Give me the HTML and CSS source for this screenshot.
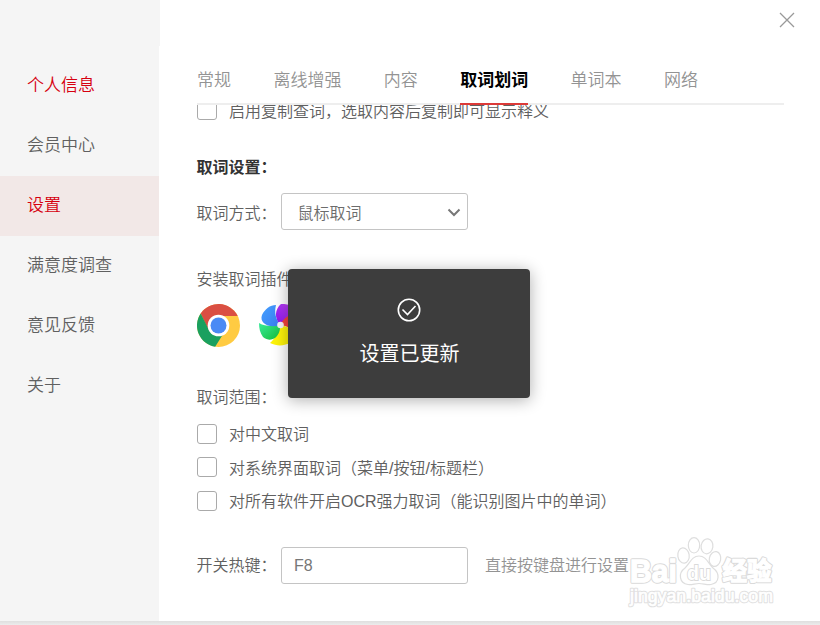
FILE: index.html
```
<!DOCTYPE html>
<html lang="zh-CN">
<head>
<meta charset="utf-8">
<title>设置</title>
<link rel="stylesheet" href="styles.css">
</head>
<body>
<div class="window">
  <nav class="sidebar">
    <a class="side-item accent">个人信息</a>
    <a class="side-item">会员中心</a>
    <a class="side-item accent selected">设置</a>
    <a class="side-item">满意度调查</a>
    <a class="side-item">意见反馈</a>
    <a class="side-item">关于</a>
  </nav>
  <main class="main">
    <header class="titlebar">
      <svg class="close" width="16" height="16" viewBox="0 0 16 16"><path d="M1 1L15 15M15 1L1 15" stroke="#999" stroke-width="1.3" fill="none"/></svg>
    </header>
    <div class="tabs">
      <span class="tab">常规</span>
      <span class="tab">离线增强</span>
      <span class="tab">内容</span>
      <span class="tab active">取词划词</span>
      <span class="tab">单词本</span>
      <span class="tab">网络</span>
    </div>
    <section class="content">
      <label class="check first"><i class="box"></i><span>启用复制查词，选取内容后复制即可显示释义</span></label>
      <h2 class="heading">取词设置：</h2>
      <div class="field">
        <span class="field-label">取词方式：</span>
        <div class="control select"><span>鼠标取词</span>
          <svg width="14" height="9" viewBox="0 0 14 9"><path d="M1.5 1.500L7 7L12.500 1.500" fill="none" stroke="#777" stroke-width="2"/></svg>
        </div>
      </div>
      <p class="label plugins-label">安装取词插件：</p>
      <div class="plugins">
        <svg width="43" height="43" viewBox="0 0 43 43">
          <circle cx="21.500" cy="21.500" r="21.500" fill="#ffcb42"/>
          <path d="M21.500 21.500L12 27L3.700 9.440A21.500 21.500 0 0 1 40.500 11.440V12H21.500Z" fill="#da4f43"/>
          <path d="M3.700 9.440A21.500 21.500 0 0 0 18.200 42.750L28 27L12 26Z" fill="#1aa05f"/>
          <circle cx="21.500" cy="21.500" r="10.800" fill="#fff"/>
          <circle cx="21.500" cy="21.500" r="8" fill="#4a8af5"/>
        </svg>
        <svg width="43" height="43" viewBox="0 0 43 43">
          <defs>
            <linearGradient id="blue" x1="0" y1="0" x2="1" y2="1"><stop offset="0" stop-color="#43a0ff"/><stop offset="1" stop-color="#3b7df0"/></linearGradient>
            <linearGradient id="green" x1="0" y1="0" x2="1" y2="1"><stop offset="0" stop-color="#37eb9a"/><stop offset="1" stop-color="#16bd39"/></linearGradient>
            <linearGradient id="purple" x1="0" y1="1" x2="1" y2="0"><stop offset="0" stop-color="#8d12f0"/><stop offset="1" stop-color="#c54af5"/></linearGradient>
          </defs>
          <path d="M21 21C15 14 16 5 22 0C31 0 36 2 39 7C32 9 27 14 21 21Z" fill="url(#purple)"/>
          <path d="M21 21C26 12 34 8 39 10C43 17 43 24 41 29C34 25 28 22 21 21Z" fill="#f5423b"/>
          <path d="M21 21C30 23 37 26 40 31C34 39 23 45 11 39C17 34 19 28 21 21Z" fill="#fdf309"/>
          <path d="M21 21C22 32 13 40 4 33C1 29 0 24 0 19C7 23 14 22 21 21Z" fill="url(#green)"/>
          <path d="M21 21C10 25 0 19 3 11C6 5 11 1 17 1C15 9 17 15 21 21Z" fill="url(#blue)"/>
          <circle cx="21.500" cy="21" r="3.300" fill="#f7f5f7"/>
        </svg>
      </div>
      <p class="label range-label">取词范围：</p>
      <div class="checks">
        <label class="check"><i class="box"></i><span>对中文取词</span></label>
        <label class="check middle"><i class="box"></i><span>对系统界面取词（菜单/按钮/标题栏）</span></label>
        <label class="check last"><i class="box"></i><span>对所有软件开启OCR强力取词（能识别图片中的单词）</span></label>
      </div>
      <div class="field hotkey">
        <span class="field-label">开关热键：</span>
        <div class="control input">F8</div>
        <span class="hint">直接按键盘进行设置</span>
      </div>
    </section>
  </main>
</div>
<footer class="backdrop"></footer>
<div class="toast">
  <svg width="24" height="24" viewBox="0 0 24 24" fill="none" stroke="#fff"><circle cx="12" cy="12" r="10.700" stroke-width="1.600"/><path d="M5.500 11.500L10.500 16.500L18.500 8" stroke-width="1.600"/></svg>
  <span>设置已更新</span>
</div>
<svg class="watermark" width="160" height="80" viewBox="0 0 160 80">
  <defs>
    <g id="logo">
      <text class="mark-latin" x="6" y="47" font-size="32" textLength="47" lengthAdjust="spacingAndGlyphs">Bai</text>
      <text class="mark-cjk" x="98.500" y="45" font-size="24.500">经验</text>
    </g>
    <text id="site" class="mark-small" x="6" y="67" font-size="18" textLength="143" lengthAdjust="spacingAndGlyphs">jingyan.baidu.com</text>
    <text id="du" class="mark-latin" x="63" y="45" font-size="21" textLength="24" lengthAdjust="spacingAndGlyphs">du</text>
  </defs>
  <g fill="#fff" stroke="#dedede" stroke-width="1.200">
    <ellipse cx="59.500" cy="20.500" rx="5.700" ry="7.700" transform="rotate(-8 59.500 20.500)"/>
    <ellipse cx="70" cy="10.300" rx="5.700" ry="7.700"/>
    <ellipse cx="83" cy="11.300" rx="5.900" ry="7.500" transform="rotate(8 83 11.300)"/>
    <ellipse cx="91" cy="24" rx="5.700" ry="7.500" transform="rotate(12 91 24)"/>
    <path d="M75 21C68 21 66 28 61 33C54 38 55 48 64 49.500C68 50 71 48.500 75 48.500C79 48.500 83 50 87 49.500C96 48 96 38 89 33C84 28 82 21 75 21Z"/>
  </g>
  <use href="#logo" fill="#dadada" stroke="#dadada" stroke-width="3.400" stroke-linejoin="round"/>
  <use href="#logo" fill="#fff" stroke="#fff" stroke-width="1.300"/>
  <use href="#site" fill="#dedede" stroke="#dedede" stroke-width="2.600" stroke-linejoin="round"/>
  <use href="#site" fill="#fff" stroke="#fff" stroke-width=".7"/>
  <use href="#du" fill="#dadada" stroke="#dadada" stroke-width="1.800"/>
  <use href="#du" fill="#fff"/>
</svg>
</body>
</html>
```
FILE: styles.css
```
* { box-sizing: border-box; }
body {
  margin: 0;
  width: 820px;
  height: 625px;
  overflow: hidden;
  position: relative;
  background: #fff;
  color: #606060;
  font: 350 16px/24px "Liberation Sans", "Noto Sans CJK SC", sans-serif;
}
.window { display: flex; height: 621px; }
.sidebar {
  width: 159px;
  flex: none;
  padding-top: 56px;
  background: #f5f5f5;
}
.side-item {
  display: flex;
  align-items: center;
  height: 60px;
  padding-left: 27px;
  font-size: 17px;
}
.accent { color: #d6000f; }
.selected { background: #f2e8e7; }
.main { flex: 1; min-width: 0; display: flex; flex-direction: column; }
.titlebar {
  height: 46px;
  flex: none;
  display: flex;
  justify-content: flex-end;
  padding: 12px 25.5px 0 0;
  border-left: 1px solid #f5f5f5;
}
.close { display: block; }
.tabs {
  flex: none;
  display: flex;
  gap: 42.4px;
  height: 59px;
  margin: 0 36px 0 38px;
  border-bottom: 2px solid #eee;
}
.tab {
  height: 59px;
  padding-top: 23px;
  font-size: 17px;
  color: #939393;
  white-space: nowrap;
}
.tab.active { color: #000; font-weight: 700; border-bottom: 2px solid #dc3a38; }
.content {
  flex: 1;
  min-height: 0;
  overflow: hidden;
  padding-left: 38px;
}
.check { display: flex; align-items: center; gap: 12px; height: 20px; white-space: nowrap; }
.check.first { margin-top: -5px; }
.check.first span { padding-top: 3px; }
.box { width: 20px; height: 20px; flex: none; border: 1px solid #aaa; border-radius: 3px; }
.heading { margin: 36px 0 0 -0.5px; font-size: 16px; line-height: 24px; font-weight: 700; color: #333; }
.field { display: flex; align-items: center; height: 37px; margin-top: 13px; }
.field-label { width: 84.5px; margin-left: -0.5px; padding-top: 4px; white-space: nowrap; }
.control {
  display: flex;
  align-items: center;
  width: 187px;
  height: 37px;
  border: 1px solid #c4c4c4;
  border-radius: 3px;
}
.select { justify-content: space-between; padding: 0 6px 0 15.5px; color: #6c6c6c; }
.select span { padding-top: 4px; }
.select svg { margin-top: 2px; }
.input { padding-left: 12px; color: #777; }
.hint { margin-left: 17px; color: #939393; }
.label { margin: 0 0 0 -0.5px; height: 24px; }
.plugins-label { margin-top: 38px; }
.plugins { display: flex; gap: 19px; height: 43px; margin-top: 12px; }
.range-label { margin-top: 39px; }
.checks { display: flex; flex-direction: column; gap: 13px; margin-top: 14px; }
.checks .check span { padding-top: 2px; }
.checks .middle span { padding-top: 4px; }
.checks .last { margin-top: 1px; }
.hotkey { margin-top: 36px; }
.hotkey .field-label { padding-top: 0; }
.backdrop { height: 4px; background: linear-gradient(#dfdfdf, #ececec); }
.toast {
  position: absolute;
  left: 288px;
  top: 269px;
  width: 242px;
  height: 129px;
  padding-top: 29px;
  display: flex;
  flex-direction: column;
  align-items: center;
  gap: 17px;
  border-radius: 4px;
  background: #3d3d3d;
  color: #fff;
  font-size: 20px;
  line-height: 30px;
  box-shadow: 0 2px 16px rgba(0, 0, 0, .32);
}
.toast span { padding-left: 1px; font-weight: 400; }
.watermark { position: absolute; left: 624px; top: 535px; }
.mark-latin { font-family: "Liberation Sans", sans-serif; font-weight: 700; }
.mark-cjk { font-family: "Noto Sans CJK SC", sans-serif; font-weight: 700; }
.mark-small { font-family: "Liberation Sans", sans-serif; font-weight: 400; }
```
